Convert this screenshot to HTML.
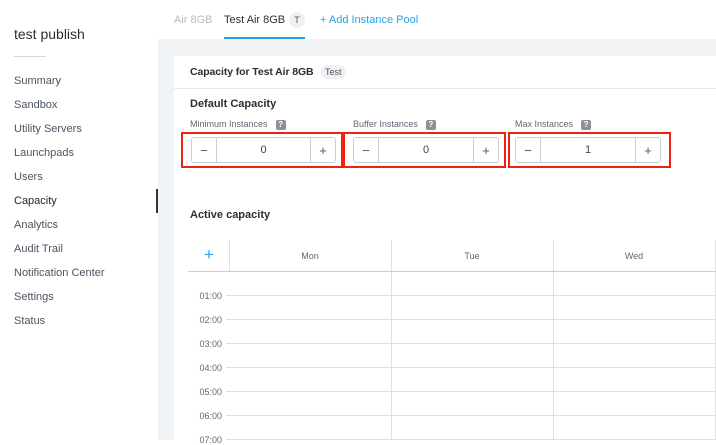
<!DOCTYPE html>
<html><head><meta charset="utf-8"><style>
*{box-sizing:border-box;margin:0;padding:0}
body{width:716px;height:440px;overflow:hidden;font-family:"Liberation Sans",sans-serif;background:#fff;position:relative;color:#2b2f33}
.abs{position:absolute}
.side a{position:absolute;left:14px;font-size:11px;color:#4a5560;display:block;white-space:nowrap}
.main{left:158px;top:39px;width:558px;height:401px;background:#f1f4f7}
.card{left:174px;top:56px;width:542px;height:384px;background:#fff}
.lbl{font-size:9px;color:#5f6873}
.q{display:inline-block;width:10px;height:10px;background:#8a9199;color:#fff;font-size:8px;text-align:center;line-height:10px;border-radius:2px;font-weight:bold;vertical-align:middle;margin-left:8px}
.red{border:2px solid #ee2211}
.step{border:1px solid #c9ced4;border-radius:3px;height:26px;display:flex;font-size:11px;color:#444;background:#fff}
.step span{display:flex;align-items:center;justify-content:center}
.step .b{width:24px;font-size:13px;color:#555}
.step .v{flex:1;border-left:1px solid #c9ced4;border-right:1px solid #c9ced4}
.hl{position:absolute;left:226px;width:490px;height:1px;background:#dcdfe3}
.t{position:absolute;left:192px;width:30px;text-align:right;font-size:9px;color:#5f6873}
</style></head><body>
<div class="abs" style="left:14px;top:26px;font-size:14px;color:#2b2f33">test publish</div>
<div class="abs" style="left:14px;top:56px;width:32px;height:1px;background:#d4d8dc"></div>
<div class="side">
<a style="top:75px">Summary</a><a style="top:99px">Sandbox</a><a style="top:123px">Utility Servers</a><a style="top:147px">Launchpads</a><a style="top:171px">Users</a><a style="top:195px;color:#1f2328">Capacity</a><a style="top:219px">Analytics</a><a style="top:243px">Audit Trail</a><a style="top:267px">Notification Center</a><a style="top:291px">Settings</a><a style="top:315px">Status</a>
</div>
<div class="abs" style="left:156px;top:189px;width:2px;height:24px;background:#333"></div>
<div class="abs" style="left:174px;top:14px;font-size:11px;color:#b5bcc3">Air 8GB</div>
<div class="abs" style="left:224px;top:14px;font-size:11px;color:#2b2f33">Test Air 8GB</div>
<div class="abs" style="left:289px;top:12px;width:16px;height:16px;border-radius:8px;background:#eef0f3;font-size:9px;color:#555;text-align:center;line-height:16px">T</div>
<div class="abs" style="left:224px;top:37px;width:81px;height:2px;background:#2a9fe6"></div>
<div class="abs" style="left:320px;top:14px;font-size:11px;color:#2a9fe6">+ Add Instance Pool</div>
<div class="abs main"></div>
<div class="abs card"></div>
<div class="abs" style="left:174px;top:88px;width:542px;height:1px;background:#e6e9ec"></div>
<div class="abs" style="left:190px;top:66px;font-size:10.5px;font-weight:bold;color:#2b2f33;letter-spacing:-0.1px">Capacity for Test Air 8GB</div>
<div class="abs" style="left:321px;top:65px;padding:0 4px;height:14px;line-height:14px;border-radius:7px;background:#eef0f3;font-size:9px;color:#555">Test</div>
<div class="abs" style="left:190px;top:98px;font-size:11px;font-weight:bold">Default Capacity</div>
<div class="abs lbl" style="left:190px;top:119px">Minimum Instances<span class="q">?</span></div>
<div class="abs lbl" style="left:353px;top:119px">Buffer Instances<span class="q">?</span></div>
<div class="abs lbl" style="left:515px;top:119px">Max Instances<span class="q">?</span></div>
<div class="abs red" style="left:181px;top:132px;width:162px;height:36px"></div>
<div class="abs red" style="left:343px;top:132px;width:163px;height:36px"></div>
<div class="abs red" style="left:508px;top:132px;width:163px;height:36px"></div>
<div class="abs step" style="left:191px;top:137px;width:145px"><span class="b">−</span><span class="v">0</span><span class="b">+</span></div>
<div class="abs step" style="left:353px;top:137px;width:146px"><span class="b">−</span><span class="v">0</span><span class="b">+</span></div>
<div class="abs step" style="left:515px;top:137px;width:146px"><span class="b">−</span><span class="v">1</span><span class="b">+</span></div>
<div class="abs" style="left:190px;top:209px;font-size:11px;font-weight:bold">Active capacity</div>
<div class="abs" style="left:204px;top:245px;font-size:17px;color:#2a9fe6;line-height:20px">+</div>
<div class="abs" style="left:229px;top:240px;width:1px;height:31px;background:#dcdfe3"></div>
<div class="abs" style="left:391px;top:240px;width:1px;height:200px;background:#dcdfe3"></div>
<div class="abs" style="left:553px;top:240px;width:1px;height:200px;background:#dcdfe3"></div>
<div class="abs" style="left:715px;top:240px;width:1px;height:200px;background:#dcdfe3"></div>
<div class="abs" style="left:188px;top:271px;width:528px;height:1px;background:#c9ced4"></div>
<div class="abs lbl" style="left:229px;top:251px;width:162px;text-align:center">Mon</div>
<div class="abs lbl" style="left:391px;top:251px;width:162px;text-align:center">Tue</div>
<div class="abs lbl" style="left:553px;top:251px;width:162px;text-align:center">Wed</div>
<div class="hl" style="top:295px"></div><div class="t" style="top:291px">01:00</div>
<div class="hl" style="top:319px"></div><div class="t" style="top:315px">02:00</div>
<div class="hl" style="top:343px"></div><div class="t" style="top:339px">03:00</div>
<div class="hl" style="top:367px"></div><div class="t" style="top:363px">04:00</div>
<div class="hl" style="top:391px"></div><div class="t" style="top:387px">05:00</div>
<div class="hl" style="top:415px"></div><div class="t" style="top:411px">06:00</div>
<div class="hl" style="top:439px"></div><div class="t" style="top:435px">07:00</div>
</body></html>
